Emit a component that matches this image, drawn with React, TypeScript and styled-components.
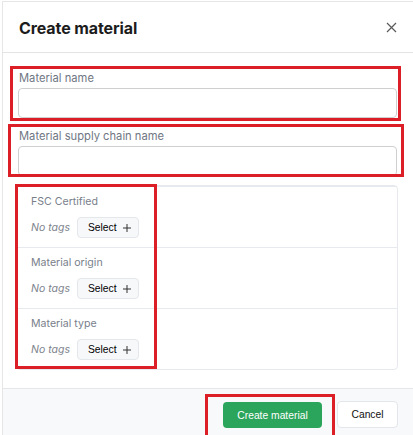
import React from "react";
import styled, { createGlobalStyle } from "styled-components";

const Global = createGlobalStyle`
  html, body { margin: 0; padding: 0; background: #ffffff; overflow: hidden; }
  body { font-family: "Inter", "Noto Sans", sans-serif; }
  * { box-sizing: border-box; }
`;

const Modal = styled.div`
  margin: 1px 0 0 2px;
  width: 430px;
  height: 460px;
  border: 1px solid #e6e6e6;
  background: #ffffff;
  display: flex;
  flex-direction: column;
`;

const Header = styled.div`
  height: 51px;
  border-bottom: 1px solid #e4e4e4;
  display: flex;
  align-items: center;
  padding: 0 0 0 16px;
  width: 411px;
`;

const Title = styled.h2`
  margin: 0;
  font-family: "Inter", "Noto Sans", sans-serif;
  font-weight: 700;
  font-size: 16px;
  letter-spacing: -0.1px;
  color: #1c1c1c;
  flex: 1;
  padding-top: 1px;
`;

const CloseButton = styled.button`
  border: none;
  background: none;
  padding: 0;
  width: 12px;
  height: 12px;
  margin-right: 17px;
  display: flex;
  align-items: center;
  justify-content: center;
  color: #5a5a5a;
  cursor: pointer;
`;

const Body = styled.div`
  padding: 18px 17px 18px 15px;
  width: 411px;
  display: flex;
  flex-direction: column;
`;

const Field = styled.div<{ $gap: number }>`
  position: relative;
  display: flex;
  flex-direction: column;
  margin-bottom: ${(p) => p.$gap}px;
`;

const Highlight = styled.div<{ $t: number; $r: number; $b: number; $l: number }>`
  position: absolute;
  top: ${(p) => p.$t}px;
  right: ${(p) => p.$r}px;
  bottom: ${(p) => p.$b}px;
  left: ${(p) => p.$l}px;
  border: 3px solid #dc1f26;
  pointer-events: none;
  z-index: 2;
`;

const Label = styled.label`
  font-family: "Inter", "Noto Sans", sans-serif;
  font-size: 11.2px;
  line-height: 14px;
  color: #6f7683;
  margin: 0 0 3px 1px;
`;

const Input = styled.input`
  height: 30px;
  width: 100%;
  border: 1px solid #cfcfcf;
  border-radius: 4px;
  background: #ffffff;
  font-size: 13px;
  padding: 0 8px;
  outline: none;
`;

const TagPanel = styled.div`
  position: relative;
  border: 1px solid #e6e9ee;
  border-radius: 4px;
  margin: 0 0 0 -2px;
  width: 382px;
`;

const TagRow = styled.div`
  padding: 8px 14px 9px 14px;
  border-top: 1px solid #e6e9ee;
  &:first-of-type { border-top: none; }
  display: flex;
  flex-direction: column;
`;

const TagLabel = styled.div`
  font-family: "Inter", "Noto Sans", sans-serif;
  font-size: 10.6px;
  line-height: 14px;
  color: #79808b;
  margin-bottom: 8px;
`;

const TagLine = styled.div`
  display: flex;
  align-items: center;
  gap: 7px;
`;

const NoTags = styled.span`
  font-family: "Inter", "Noto Sans", sans-serif;
  font-style: italic;
  font-size: 10.5px;
  color: #7d838d;
`;

const SelectButton = styled.button`
  height: 21px;
  width: 62px;
  padding: 0 0 0 10px;
  display: flex;
  align-items: center;
  gap: 6px;
  border: 1px solid #e4e7eb;
  border-radius: 4px;
  background: #f7f8fa;
  font-family: "Liberation Sans", Arial, sans-serif;
  font-size: 10.3px;
  color: #000000;
`;

const Footer = styled.div`
  border-top: 1px solid #e4e6e9;
  background: #f8f9fa;
  width: 411px;
  flex: 1;
  display: flex;
  justify-content: flex-end;
  align-items: flex-start;
  padding: 13px 16px 0 0;
  gap: 15px;
`;

const ButtonWrap = styled.div`
  position: relative;
`;

const PrimaryButton = styled.button`
  height: 26px;
  width: 99px;
  padding: 0;
  border: none;
  border-radius: 4px;
  background: #2ba55b;
  color: #ffffff;
  font-family: "Liberation Sans", Arial, sans-serif;
  font-size: 10.3px;
`;

const SecondaryButton = styled.button`
  height: 27px;
  width: 61px;
  margin-top: -1px;
  border: 1px solid #e3e6ea;
  border-radius: 4px;
  background: #ffffff;
  color: #111111;
  font-family: "Liberation Sans", Arial, sans-serif;
  font-size: 10.3px;
`;

const tags = ["FSC Certified", "Material origin", "Material type"];

export default function App() {
  return (
    <>
      <Global />
      <Modal>
        <Header>
          <Title>Create material</Title>
          <CloseButton aria-label="Close">
            <svg width="11" height="11" viewBox="0 0 11 11">
              <path d="M1 1 L10 10 M10 1 L1 10" stroke="currentColor" strokeWidth="1.2" fill="none" />
            </svg>
          </CloseButton>
        </Header>
        <Body>
          <Field $gap={11}>
            <Highlight $t={-5} $r={-4} $b={-3} $l={-8} />
            <Label>Material name</Label>
            <Input />
          </Field>
          <Field $gap={9}>
            <Highlight $t={-5} $r={-7} $b={-1} $l={-10} />
            <Label>Material supply chain name</Label>
            <Input />
          </Field>
          <TagPanel>
            <Highlight $t={-2} $r={240} $b={0} $l={-2} />
            {tags.map((t) => (
              <TagRow key={t}>
                <TagLabel>{t}</TagLabel>
                <TagLine>
                  <NoTags>No tags</NoTags>
                  <SelectButton>
                    Select
                    <svg width="8" height="8" viewBox="0 0 8 8">
                      <path d="M4 0 V8 M0 4 H8" stroke="#333" strokeWidth="1" fill="none" />
                    </svg>
                  </SelectButton>
                </TagLine>
              </TagRow>
            ))}
          </TagPanel>
        </Body>
        <Footer>
          <ButtonWrap>
            <Highlight $t={-8} $r={-13} $b={-12} $l={-18} />
            <PrimaryButton>Create material</PrimaryButton>
          </ButtonWrap>
          <SecondaryButton>Cancel</SecondaryButton>
        </Footer>
      </Modal>
    </>
  );
}
